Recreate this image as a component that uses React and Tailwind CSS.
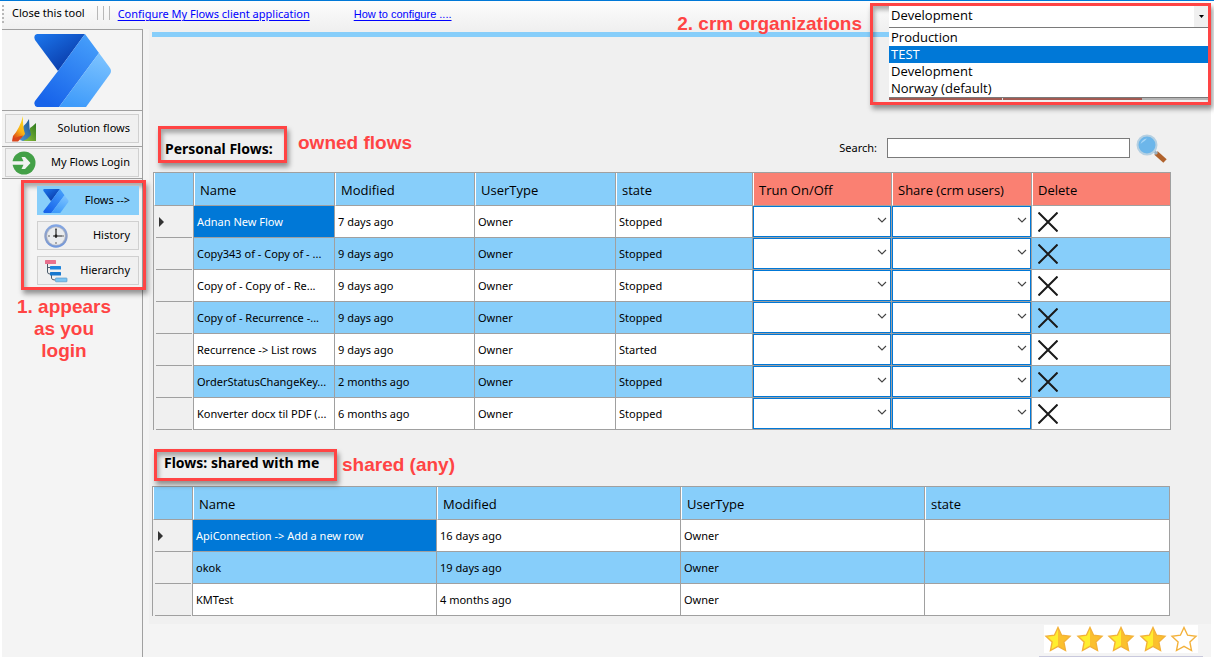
import React from "react";

const personalFlows = [
  ["Adnan New Flow", "7 days ago", "Owner", "Stopped"],
  ["Copy343 of - Copy of - ...", "9 days ago", "Owner", "Stopped"],
  ["Copy of - Copy of - Re...", "9 days ago", "Owner", "Stopped"],
  ["Copy of - Recurrence -...", "9 days ago", "Owner", "Stopped"],
  ["Recurrence -> List rows", "9 days ago", "Owner", "Started"],
  ["OrderStatusChangeKey...", "2 months ago", "Owner", "Stopped"],
  ["Konverter docx til PDF (...", "6 months ago", "Owner", "Stopped"],
];

const sharedFlows = [
  ["ApiConnection -> Add a new row", "16 days ago", "Owner", ""],
  ["okok", "19 days ago", "Owner", ""],
  ["KMTest", "4 months ago", "Owner", ""],
];

function FlowLogo({ id, className }) {
  return (
    <svg viewBox="0 0 78 73" className={className} aria-hidden="true">
      <defs>
        <linearGradient id={id + "a"} x1="0.1" y1="0" x2="0.75" y2="0.75">
          <stop offset="0" stopColor="#1b74ea" />
          <stop offset="1" stopColor="#0b3fae" />
        </linearGradient>
        <linearGradient id={id + "b"} x1="0.85" y1="0" x2="0.3" y2="1">
          <stop offset="0" stopColor="#47a0fb" />
          <stop offset="1" stopColor="#1763ea" />
        </linearGradient>
        <linearGradient id={id + "c"} x1="0.7" y1="0" x2="0.4" y2="1">
          <stop offset="0" stopColor="#7cc3ff" />
          <stop offset="1" stopColor="#3f9bfa" />
        </linearGradient>
      </defs>
      <path d="M3 0H51L24 37L1 6Q-1 1 3 0Z" fill={"url(#" + id + "a)"} />
      <path d="M51 0L65 19L25 73H3Q-1 71 1 67L24 37Z" fill={"url(#" + id + "b)"} />
      <path d="M65 19L76 34Q78 37 76 40L52 73H25Z" fill={"url(#" + id + "c)"} />
    </svg>
  );
}

function DynamicsIcon() {
  return (
    <svg viewBox="0 0 24 26" className="ml-px h-[26px] w-6" aria-hidden="true">
      <defs>
        <linearGradient id="dynY" x1="0.8" y1="0" x2="0.3" y2="1">
          <stop offset="0" stopColor="#ffdc1c" />
          <stop offset="0.55" stopColor="#f9b116" />
          <stop offset="1" stopColor="#d93a1a" />
        </linearGradient>
        <linearGradient id="dynB" x1="1" y1="0" x2="0" y2="1">
          <stop offset="0" stopColor="#1f5490" />
          <stop offset="1" stopColor="#4d97cf" />
        </linearGradient>
        <linearGradient id="dynG" x1="1" y1="0" x2="0" y2="1">
          <stop offset="0" stopColor="#2c7a1f" />
          <stop offset="1" stopColor="#9bc53d" />
        </linearGradient>
      </defs>
      <path d="M24 7V25H10Q19 18 18 12Q21 10 24 7Z" fill="url(#dynG)" />
      <path d="M17 3Q17 12 19 19Q16 23 11 25L8 24L11.500 10Q15 7 17 3Z" fill="url(#dynB)" />
      <path d="M11 0Q10.500 10 13 18Q10 23 0 25L1 20Q8 12 11 0Z" fill="url(#dynY)" />
      <path d="M0 25.500Q2 21 11 19.500Q10 22 6 25.500Z" fill="#d8461d" />
    </svg>
  );
}

function LoginIcon() {
  return (
    <svg viewBox="0 0 24 24" className="ml-px h-6 w-6" aria-hidden="true">
      <circle cx="12" cy="12" r="11.5" fill="#43a047" />
      <path d="M0 10.3H11.500L9.500 6H13L18.500 12L13 18H9.500L11.500 13.700H0Z" fill="#f3f3f3" />
    </svg>
  );
}

function ClockIcon() {
  return (
    <svg viewBox="0 0 24 24" className="ml-px mt-px h-6 w-6" aria-hidden="true">
      <defs>
        <linearGradient id="clockRim" x1="0" y1="0" x2="0" y2="1">
          <stop offset="0" stopColor="#7fa6e8" />
          <stop offset="0.5" stopColor="#8f9fc4" />
          <stop offset="1" stopColor="#6f98e0" />
        </linearGradient>
      </defs>
      <circle cx="12" cy="12" r="11.7" fill="url(#clockRim)" />
      <circle cx="12" cy="12" r="9.600" fill="#b9bdc6" />
      <circle cx="12" cy="12" r="8.800" fill="#e9ebee" />
      <path d="M12 4V6M12 18V20M4 12H6M18 12H20" stroke="#666" strokeWidth="1" />
      <path d="M12 5V14M9 12H18" stroke="#222" strokeWidth="1.200" />
      <circle cx="12" cy="12" r="1.400" fill="#222" />
    </svg>
  );
}

function HierarchyIcon() {
  return (
    <svg viewBox="0 0 24 24" className="ml-px h-6 w-6" aria-hidden="true">
      <path d="M3.500 5V13Q3.500 15 6 15M3.500 8.500H6M7.500 16V19Q7.500 21 11 21" fill="none" stroke="#4a5a6a" strokeWidth="1" />
      <rect x="1" y="1" width="11" height="4" rx="0.6" fill="#e8718d" />
      <rect x="6" y="7" width="11" height="3.500" rx="0.600" fill="#1d84dd" />
      <rect x="6" y="13" width="11" height="3.500" rx="0.600" fill="#1878cf" />
      <rect x="11.500" y="19" width="11.500" height="3.800" rx="0.600" fill="#7cc4f2" stroke="#4b8fc0" strokeWidth="0.600" />
    </svg>
  );
}

function SearchIcon() {
  return (
    <svg viewBox="0 0 32 30" className="h-[30px] w-8" aria-hidden="true">
      <path d="M20 20L29 28" stroke="#b0622c" strokeWidth="5" />
      <path d="M17 17L21 21" stroke="#9ab0c0" strokeWidth="3" />
      <circle cx="11" cy="12" r="9.500" fill="#6cb6ea" stroke="#b5d0e2" strokeWidth="2" />
      <path d="M4.500 11Q6 6 11 5.500Q9 8 7 9Q5.500 10 4.500 11Z" fill="#a6d6f7" />
    </svg>
  );
}

function Star({ filled }) {
  return (
    <svg viewBox="0 0 28 26" className="h-[26px] w-7" aria-hidden="true">
      <path
        d="M14 1.500L17.600 9.200L26 10.300L19.900 16.100L21.500 24.500L14 20.400L6.500 24.500L8.100 16.100L2 10.300L10.400 9.200Z"
        fill={filled ? "#ffee2e" : "#ffffff"}
      />
      {filled && <path d="M14 1.500L17.600 9.200L26 10.300L19.900 16.100L21.500 24.500L14 20.400Z" fill="#fbc02d" />}
      <path
        d="M14 1.500L17.600 9.200L26 10.300L19.900 16.100L21.500 24.500L14 20.400L6.500 24.500L8.100 16.100L2 10.300L10.400 9.200Z"
        fill="none"
        stroke="#f3b13a"
        strokeWidth="1.400"
      />
    </svg>
  );
}

function SideButton({ icon, label, active }) {
  return (
    <button
      type="button"
      className={
        "flex h-[29px] w-full items-center justify-between border pl-[5px] pr-2 " +
        (active ? "border-[#87cefa] bg-[#87cefa]" : "border-[#d0d0d0] bg-[#f0f0f0]")
      }
    >
      {icon}
      <span>{label}</span>
    </button>
  );
}

function RowMarker({ current }) {
  return (
    <td className="border-r border-[#a0a0a0] bg-[#f0f0f0] p-0">
      <div className="ml-0.5 mr-px flex h-8 items-center border-b border-[#a0a0a0] pl-[3px]">
        {current && (
          <svg viewBox="0 0 5 10" className="h-[10px] w-[5px]" role="img" aria-label="Current row">
            <path d="M0 0L5 5L0 10Z" fill="#333" />
          </svg>
        )}
      </div>
    </td>
  );
}

function HeaderCell({ children, danger }) {
  return (
    <th
      scope="col"
      className={
        "h-[33px] border-b border-l border-r border-b-[#a0a0a0] border-l-white border-r-[#a0a0a0] p-0 pl-[5px] pt-1 text-left text-[13px] font-normal font-['Open_Sans',sans-serif] " +
        (danger ? "bg-[#fa8072]" : "bg-[#87cefa]")
      }
    >
      {children}
    </th>
  );
}

function TextCells({ row, first }) {
  return row.map((text, i) => (
    <td
      key={i}
      className={
        "h-8 overflow-hidden whitespace-nowrap border-b border-r border-[#a0a0a0] p-0 pl-[3px] pt-px " +
        (first && i === 0 ? "bg-[#0078d7] text-white" : "")
      }
    >
      {text}
    </td>
  ));
}

function DropCell({ label }) {
  return (
    <td className="h-8 border-b border-r border-[#a0a0a0] bg-white p-0">
      <div className="grid items-center">
        <select
          aria-label={label}
          className="col-start-1 row-start-1 block h-[31px] w-full appearance-none border border-[#0078d7] bg-white pl-1 pr-5"
        >
          <option value=""></option>
        </select>
        <svg viewBox="0 0 10 6" className="pointer-events-none col-start-1 row-start-1 mb-1 mr-1 h-1.5 w-[10px] justify-self-end" aria-hidden="true">
          <path d="M1 1L5 5L9 1" fill="none" stroke="#444" strokeWidth="1.100" />
        </svg>
      </div>
    </td>
  );
}

const tableClass =
  "w-full table-fixed border-separate border-spacing-0 border-l border-t border-[#a0a0a0] text-[11px]";
const boxClass = "border-[3px] border-[#ff4444] shadow-[2px_4px_5px_rgba(0,0,0,0.4),inset_2px_4px_4px_rgba(0,0,0,0.3)]";
const noteClass = "text-[19px] font-bold leading-[22px] text-[#ff4444] font-['Liberation_Sans',sans-serif]";

export default function App() {
  return (
    <div className="relative flex min-h-screen flex-col border-t border-[#0078d7] bg-white pl-0.5 pr-[3px] font-['Noto_Sans',sans-serif] text-[11px] text-black">
      <header className="flex h-7 bg-linear-to-b from-[#fdfdfd] to-[#f0f0f0]">
        <div className="mt-1 h-[18px] w-0 border-l-2 border-dotted border-[#b8b8b8]" />
        <button type="button" className="ml-2 h-6 whitespace-nowrap">
          Close this tool
        </button>
        <div className="ml-3 mt-[5px] flex h-[14px] gap-[5px]">
          <i className="w-px bg-[#b8b8b8]" />
          <i className="w-px bg-[#b8b8b8]" />
          <i className="w-px bg-[#b8b8b8]" />
        </div>
        <a href="#configure" className="ml-2 whitespace-nowrap leading-[26px] text-[#0000ff] underline underline-offset-2">
          Configure My Flows client application
        </a>
        <a
          href="#how-to"
          className="ml-11 whitespace-nowrap font-['Liberation_Sans',sans-serif] leading-[26px] text-[#0000ff] underline underline-offset-2"
        >
          How to configure ....
        </a>
      </header>

      <div className="flex flex-1">
        <nav className="w-[141px] shrink-0 border-r border-t border-[#a0a0a0] bg-[#f4f4f4]">
          <div className="flex h-[81px] justify-center border-b border-[#a0a0a0] pl-px pt-1">
            <FlowLogo id="big" className="h-[73px] w-[78px]" />
          </div>
          <div className="border-b border-[#a0a0a0] px-[3px] py-[3px]">
            <SideButton icon={<DynamicsIcon />} label="Solution flows" />
          </div>
          <div className="border-b border-[#a0a0a0] px-[3px] py-px">
            <SideButton icon={<LoginIcon />} label="My Flows Login" />
          </div>
          <div className={"relative -mr-1 ml-[19px] mt-px flex flex-col gap-1.5 pb-0.5 pl-[13px] pr-1 pt-[3px] " + boxClass}>
            <SideButton icon={<FlowLogo id="small" className="h-6 w-[26px]" />} label="Flows -->" active />
            <SideButton icon={<ClockIcon />} label="History" />
            <SideButton icon={<HierarchyIcon />} label="Hierarchy" />
          </div>
          <p className={"ml-3 mt-1.5 w-[100px] text-center " + noteClass}>1. appears as you login</p>
        </nav>

        <main className="flex min-w-0 flex-1 flex-col border-l-[6px] border-[#f4f4f4] bg-[#f0f0f0] pt-[3px]">
          <div className="ml-[3px] h-[5px] bg-[#87cefa]" />

          <section className="mt-[89px] pl-1 pr-10">
            <div className="mb-[9px] flex h-[37px] items-center">
              <h2 className={"ml-[5px] flex h-full w-[129px] items-center whitespace-nowrap pl-1 pt-2 text-sm font-bold " + boxClass}>
                Personal Flows:
              </h2>
              <span className={"mb-[3px] ml-[11px] " + noteClass}>owned flows</span>
              <div className="ml-auto flex items-center pt-[7px]">
                <label htmlFor="search" className="mr-[10px]">
                  Search:
                </label>
                <input id="search" type="text" className="h-5 w-[243px] border border-[#7a7a7a] bg-white px-1" />
                <button type="button" aria-label="Run search" className="ml-1.5 mr-[3px]">
                  <SearchIcon />
                </button>
              </div>
            </div>
            <table className={tableClass}>
              <colgroup>
                <col className="w-10" />
                <col className="w-[141px]" />
                <col className="w-[140px]" />
                <col className="w-[141px]" />
                <col className="w-[137px]" />
                <col className="w-[139px]" />
                <col className="w-[140px]" />
                <col className="w-[139px]" />
              </colgroup>
              <thead>
                <tr>
                  <HeaderCell />
                  <HeaderCell>Name</HeaderCell>
                  <HeaderCell>Modified</HeaderCell>
                  <HeaderCell>UserType</HeaderCell>
                  <HeaderCell>state</HeaderCell>
                  <HeaderCell danger>Trun On/Off</HeaderCell>
                  <HeaderCell danger>Share (crm users)</HeaderCell>
                  <HeaderCell danger>Delete</HeaderCell>
                </tr>
              </thead>
              <tbody>
                {personalFlows.map((row, i) => (
                  <tr key={i} className={i % 2 ? "bg-[#87cefa]" : "bg-white"}>
                    <RowMarker current={i === 0} />
                    <TextCells row={row} first={i === 0} />
                    <DropCell label={"Turn on or off: " + row[0]} />
                    <DropCell label={"Share: " + row[0]} />
                    <td className="h-8 border-b border-r border-[#a0a0a0] p-0 pl-1.5">
                      <button type="button" aria-label={"Delete " + row[0]} className="block">
                        <svg viewBox="0 0 20 20" className="h-5 w-5" aria-hidden="true">
                          <path d="M0.500 0.500L19.500 19.500M19.500 0.500L0.500 19.500" stroke="#1a1a1a" strokeWidth="2" />
                        </svg>
                      </button>
                    </td>
                  </tr>
                ))}
              </tbody>
            </table>
          </section>

          <section className="mt-[19px] pl-[3px] pr-[41px]">
            <div className="mb-[5px] flex h-8 items-center">
              <h2 className={"ml-0.5 flex h-full w-[183px] items-center whitespace-nowrap pb-1 pl-[7px] text-sm font-bold " + boxClass}>
                Flows: shared with me
              </h2>
              <span className={"ml-[5px] " + noteClass}>shared (any)</span>
            </div>
            <table className={tableClass}>
              <colgroup>
                <col className="w-10" />
                <col className="w-[244px]" />
                <col className="w-[244px]" />
                <col className="w-[244px]" />
                <col className="w-[245px]" />
              </colgroup>
              <thead>
                <tr>
                  <HeaderCell />
                  <HeaderCell>Name</HeaderCell>
                  <HeaderCell>Modified</HeaderCell>
                  <HeaderCell>UserType</HeaderCell>
                  <HeaderCell>state</HeaderCell>
                </tr>
              </thead>
              <tbody>
                {sharedFlows.map((row, i) => (
                  <tr key={i} className={i % 2 ? "bg-[#87cefa]" : "bg-white"}>
                    <RowMarker current={i === 0} />
                    <TextCells row={row} first={i === 0} />
                  </tr>
                ))}
              </tbody>
            </table>
          </section>

          <footer className="mt-2 flex flex-1 justify-end bg-[#f4f4f4] pr-2">
            <div className="border-b border-[#c8c8dc] px-[5px] pt-px">
              <div className="flex h-7 w-[154px] items-center justify-between bg-white" role="img" aria-label="Rated 4 of 5 stars">
                <Star filled />
                <Star filled />
                <Star filled />
                <Star filled />
                <Star />
              </div>
            </div>
          </footer>
        </main>
      </div>

      <div className="absolute right-[3px] top-0.5 flex items-start">
        <span className={"mr-2 mt-[10px] whitespace-nowrap " + noteClass}>2. crm organizations</span>
        <div className={"h-[102px] w-[341px] pl-4 text-[13px] font-['Open_Sans',sans-serif] " + boxClass}>
          <div className="grid items-center">
            <select
              aria-label="Organization"
              defaultValue="Development"
              className="col-start-1 row-start-1 h-[21px] w-full appearance-none bg-white pb-0.5 pl-0.5"
            >
              <option>Production</option>
              <option>TEST</option>
              <option>Development</option>
              <option>Norway (default)</option>
            </select>
            <span className="pointer-events-none col-start-1 row-start-1 flex h-[21px] w-[14px] items-center justify-center justify-self-end bg-[#f0f0f0]">
              <svg viewBox="0 0 5 3" className="h-[3px] w-[5px]" aria-hidden="true">
                <path d="M0 0H5L2.500 3Z" fill="#000" />
              </svg>
            </span>
          </div>
          <ul role="listbox" aria-label="Organizations" className="border-y border-[#7a7a7a] bg-white pt-px leading-[17px]">
            <li role="option" aria-selected="false" className="pl-0.5">Production</li>
            <li role="option" aria-selected="true" className="bg-[#0078d7] pl-0.5 text-white">TEST</li>
            <li role="option" aria-selected="false" className="pl-0.5">Development</li>
            <li role="option" aria-selected="false" className="pl-0.5">Norway (default)</li>
          </ul>
          <div className="flex h-0.5 bg-[#b4b4b4]">
            <i className="w-[114px] border-r border-[#ddd] bg-[#a35a52]" />
            <i className="w-[139px] bg-[#a35a52]" />
          </div>
        </div>
      </div>
    </div>
  );
}
